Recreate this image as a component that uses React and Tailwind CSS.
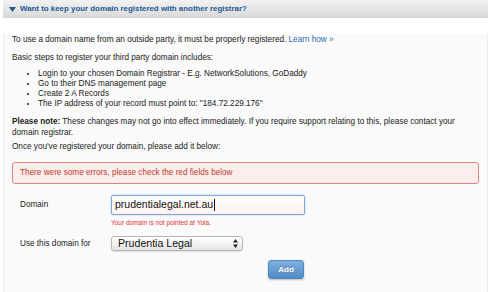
export default function App() {
  return (
    <div className="h-[292px] w-[490px] overflow-hidden bg-white font-['Liberation_Sans',Arial,sans-serif] text-[8.2px] text-[#222]">
      <div className="ml-[3px] w-[485px]">
        <div className="flex h-[18px] items-center gap-[4px] border-b border-[#d2d2d2] bg-gradient-to-b from-[#f2f2f2] to-[#dadada] pl-[6px]">
          <svg width="7" height="5" viewBox="0 0 7 5" className="mt-[1px]">
            <path d="M0 0 L7 0 L3.5 5 Z" fill="#1f5a95" />
          </svg>
          <span className="text-[7.9px] font-bold text-[#1f5a95]">Want to keep your domain registered with another registrar?</span>
        </div>
        <div className="h-[273px] border-x border-b border-[#ececec] bg-[#fafafa] px-[8px]">
          <p className="mt-[16px] leading-[11px]">
            To use a domain name from an outside party, it must be properly registered.{" "}
            <span className="text-[#2f6fae]">Learn how »</span>
          </p>
          <p className="mt-[7px] leading-[11px]">Basic steps to register your third party domain includes:</p>
          <ul className="mt-[6px] list-disc pl-[26px] leading-[10px]">
            <li>Login to your chosen Domain Registrar - E.g. NetworkSolutions, GoDaddy</li>
            <li>Go to their DNS management page</li>
            <li>Create 2 A Records</li>
            <li>The IP address of your record must point to: "184.72.229.176"</li>
          </ul>
          <p className="mt-[7px] leading-[11px]">
            <span className="font-bold">Please note:</span> These changes may not go into effect immediately. If you
            require support relating to this, please contact your
            <br />
            domain registrar.
          </p>
          <p className="mt-[3px] leading-[11px]">Once you've registered your domain, please add it below:</p>
          <div className="mt-[10px] flex h-[22px] items-center rounded-[3px] border border-[#e08585] bg-[#fdeeee] px-[7px] text-[#c0392b]">
            There were some errors, please check the red fields below
          </div>
          <div className="mt-[11px] flex items-start">
            <div className="w-[99px] pl-[8px] pt-[4px] leading-[11px]">Domain</div>
            <div>
              <div className="flex h-[20px] w-[194px] items-center rounded-[2px] border border-[#7ea8d8] bg-gradient-to-b from-white to-[#fff0f0] pl-[3px] text-[10.5px] text-[#111] shadow-[0_0_2px_#9fc2e8]">
                prudentialegal.net.au<span className="ml-[1px] h-[12px] w-px bg-[#111]" />
              </div>
              <div className="mt-[3px] text-[6.5px] leading-[9px] text-[#e0303a]">Your domain is not pointed at Yola.</div>
            </div>
          </div>
          <div className="mt-[9px] flex items-center">
            <div className="w-[99px] pl-[8px] leading-[11px]">Use this domain for</div>
            <div className="flex h-[15px] w-[132px] items-center justify-between rounded-[3px] border border-[#b5b5b5] bg-gradient-to-b from-white to-[#e6e6e6] pl-[6px] pr-[4px] text-[10.6px] text-[#111] shadow-[0_1px_1px_rgba(0,0,0,0.1)]">
              <span>Prudentia Legal</span>
              <svg width="5" height="9" viewBox="0 0 5 9">
                <path d="M0 3.5 L2.5 0 L5 3.5 Z M0 5.5 L5 5.5 L2.5 9 Z" fill="#222" />
              </svg>
            </div>
          </div>
          <div className="mt-[9px] flex pl-[256px]">
            <div className="flex h-[19px] w-[36px] items-center justify-center rounded-[3px] border border-[#4c86bd] bg-gradient-to-b from-[#7fb0dd] to-[#4f8cc6] text-[8px] font-bold text-white shadow-[0_1px_2px_rgba(0,0,0,0.25)] [text-shadow:0_-1px_0_rgba(0,0,0,0.3)]">
              Add
            </div>
          </div>
        </div>
      </div>
    </div>
  );
}
